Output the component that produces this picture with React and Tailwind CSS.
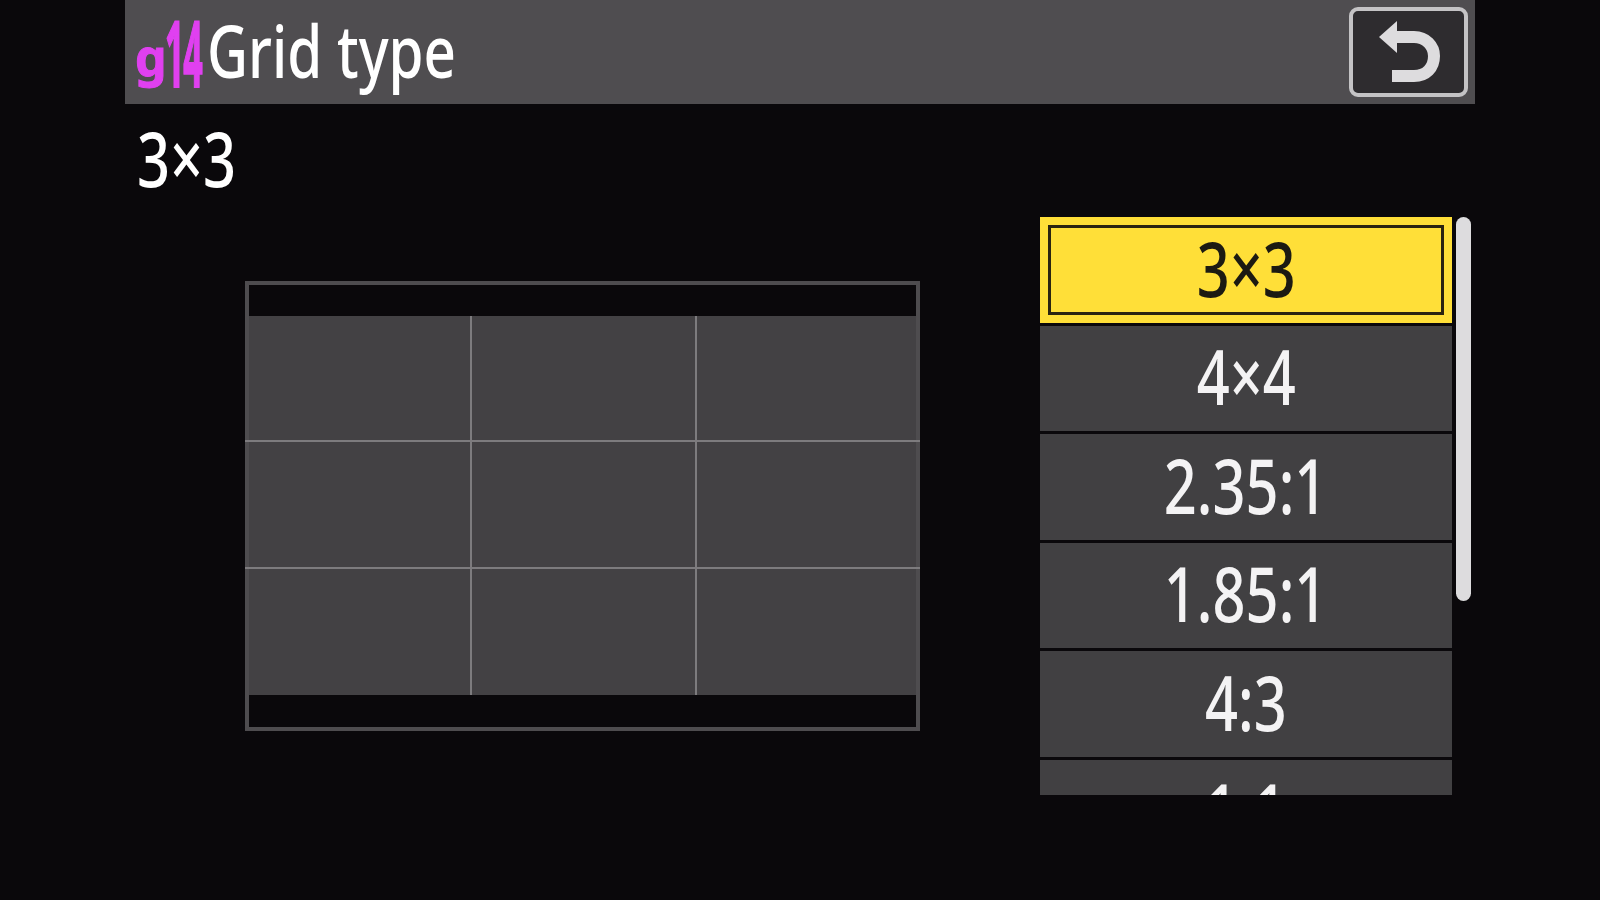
const OPTIONS = ['3×3', '4×4', '2.35:1', '1.85:1', '4:3', '1:1']

function GridPreview() {
  return (
    <div className="w-[675px] h-[450px] border-[4px] border-[#4e4c4f] bg-[#434144] flex flex-col">
      <div className="h-[31px] bg-[#0a080b] shrink-0" />
      <div className="flex-1 -mx-[4px] grid grid-cols-3 grid-rows-3">
        {Array.from({ length: 9 }).map((_, i) => (
          <div
            key={i}
            className={`border-[#7d7b7e] ${i % 3 !== 0 ? 'border-l-2' : ''} ${i < 6 ? 'border-b-2' : ''}`}
          />
        ))}
      </div>
      <div className="h-[32px] bg-[#0a080b] shrink-0" />
    </div>
  )
}

function OptionRow({ label, selected }) {
  return (
    <div
      className={`h-[105.5px] shrink-0 flex items-center justify-center ${
        selected ? 'bg-[#ffdf38] p-[8px]' : 'bg-[#414042]'
      }`}
    >
      <div className={`w-full h-full flex items-center justify-center pb-[4px] ${selected ? 'border-[3px] border-[#2a2410]' : ''}`}>
        <span className={`inline-block scale-x-[0.76] text-[76px] leading-none font-medium ${selected ? 'text-[#1c1a12]' : 'text-[#f4f3f4]'}`}>
          {label}
        </span>
      </div>
    </div>
  )
}

export default function App() {
  return (
    <div className="w-[1600px] h-[900px] overflow-hidden bg-[#0a080b] pl-[125px] pr-[125px] font-['Noto_Sans',sans-serif]">
      {/* Title bar */}
      <header className="h-[104px] bg-[#4f4d50] flex items-center justify-between pl-[10px] pr-[7px]">
        <div className="flex items-center">
          <div className="w-[72px] h-[104px] flex items-end pb-[4px] text-[#e040f0] font-bold whitespace-nowrap">
            <span className="inline-block w-[30px] text-[50px] leading-[50px] mb-[18px] origin-left [-webkit-text-stroke:1px_#e040f0]">g</span>
            <span className="inline-block text-[92px] leading-[92px] mb-[2px] scale-x-[0.37] origin-left tracking-[-3px] [-webkit-text-stroke:2px_#e040f0]">14</span>
          </div>
          <span className="inline-block pb-[4px] text-[72px] leading-none font-medium text-white scale-x-[0.785] origin-left whitespace-nowrap">Grid type</span>
        </div>
        <div className="w-[119px] h-[90px] rounded-[9px] border-[4px] border-[#c4c3c5] bg-[#2e2c2f] flex items-center justify-center">
          <svg width="66" height="62" viewBox="0 0 66 62" fill="none">
            <path d="M3 16 L21 0 V32 Z" fill="#dddcde" />
            <path d="M18 16 H38 C50 16 58 25 58 35 C58 47 50 55 38 55 H16" stroke="#dddcde" strokeWidth="12" />
          </svg>
        </div>
      </header>

      <div className="flex justify-between">
        <div className="flex flex-col pl-[12px]">
          <div className="h-[113px] pt-[18px] text-[76px] leading-[72px] font-medium text-white">
            <span className="inline-block scale-x-[0.76] origin-left">3×3</span>
          </div>
          <div className="ml-[108px] mt-[64px]">
            <GridPreview />
          </div>
        </div>

        <div className="flex pt-[113px] pr-[4px] gap-[4px]">
          <div className="w-[412px] h-[578px] overflow-hidden flex flex-col gap-[3px]">
            {OPTIONS.map((o, i) => (
              <OptionRow key={o} label={o} selected={i === 0} />
            ))}
          </div>
          <div className="w-[15px] h-[384px] rounded-full bg-[#dddcde]" />
        </div>
      </div>
    </div>
  )
}
